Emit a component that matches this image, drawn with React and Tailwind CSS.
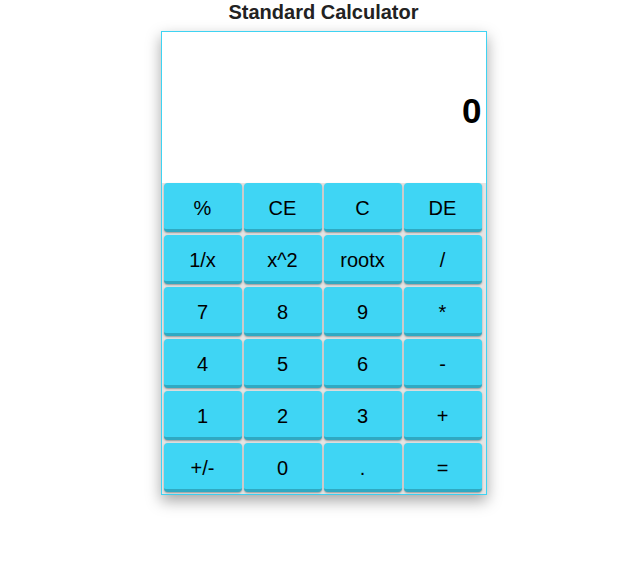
import { useState } from 'react';

const keys = [
  '%', 'CE', 'C', 'DE',
  '1/x', 'x^2', 'rootx', '/',
  '7', '8', '9', '*',
  '4', '5', '6', '-',
  '1', '2', '3', '+',
  '+/-', '0', '.', '=',
];

export default function App() {
  const [display] = useState('0');

  return (
    <div className="min-h-screen bg-white flex flex-col items-center pl-[13px] font-['Liberation_Sans',Arial,sans-serif]">
      <h1 className="text-[20px] leading-[24px] font-bold text-[#222] mb-[7px]">Standard Calculator</h1>
      <div className="w-[326px] border border-[#3fd3f2] bg-white shadow-[0_6px_14px_rgba(0,0,0,0.35)]">
        <div className="h-[151px] flex items-center justify-end pr-[4px] pt-[6px]">
          <span className="text-[35px] font-bold text-black leading-none">{display}</span>
        </div>
        <div className="grid grid-cols-[repeat(4,78px)] gap-x-[2px] gap-y-[3px] pl-[2px] pb-[2px] bg-[#e4e4e4]">
          {keys.map((k) => (
            <button
              key={k}
              className="h-[49px] pt-[4px] rounded-[4px] bg-[#3fd5f4] border-b-[3px] border-[#2fa9c2] shadow-[0_1px_2px_rgba(0,0,0,0.35)] text-[20px] text-black leading-none"
            >
              {k}
            </button>
          ))}
        </div>
      </div>
    </div>
  );
}
